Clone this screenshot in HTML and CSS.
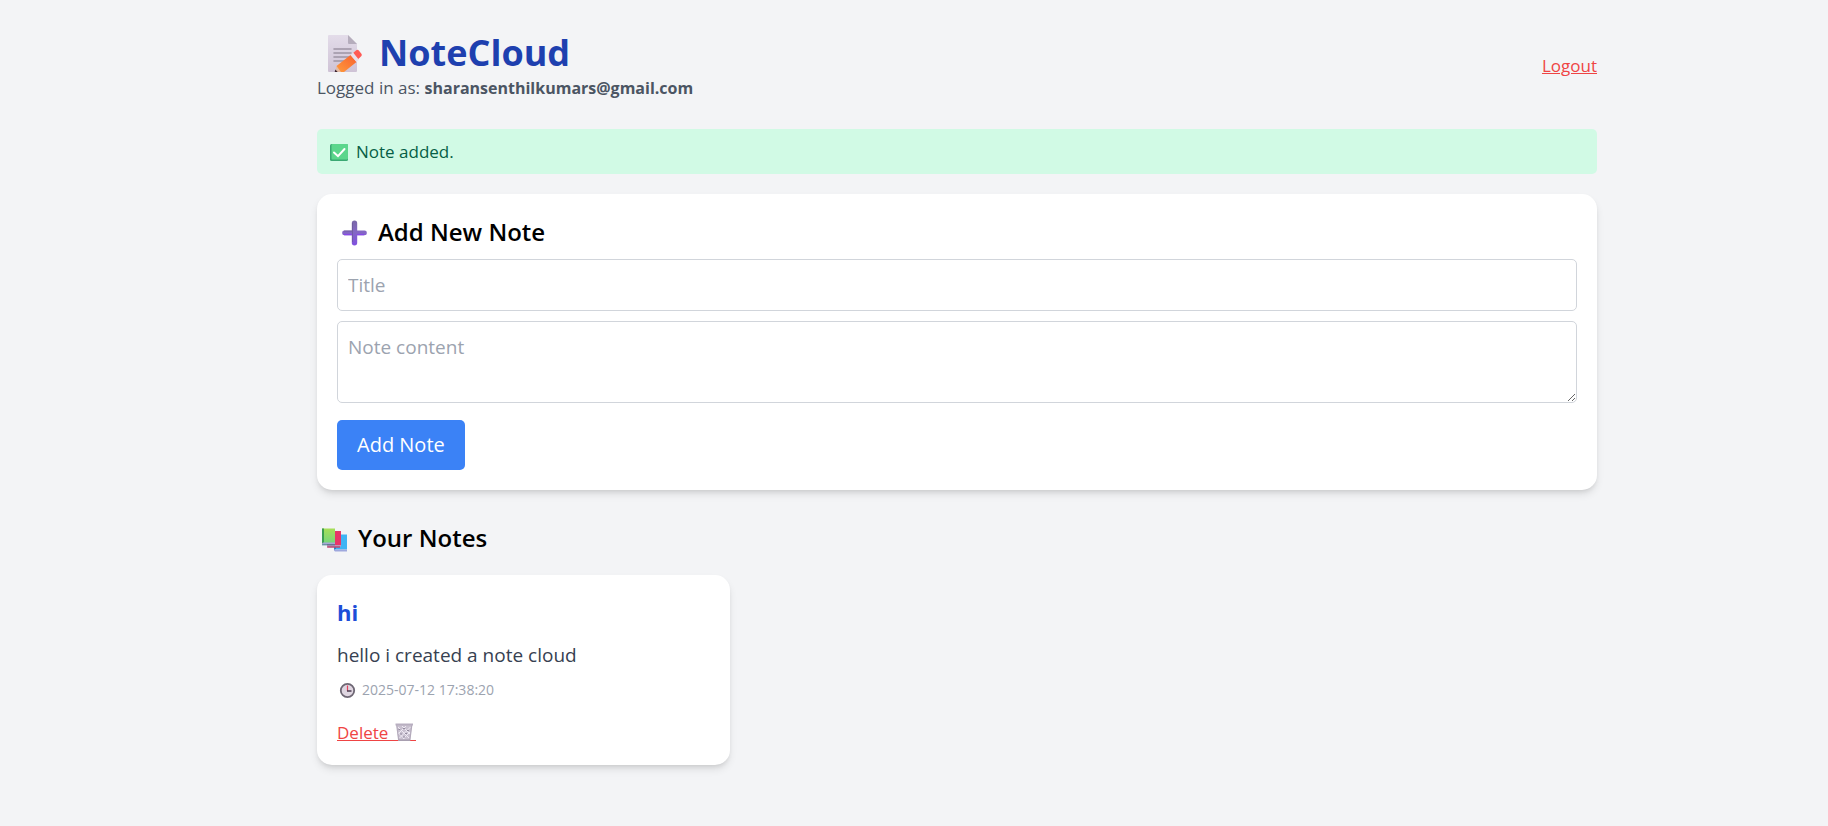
FILE: index.html
```html
<!DOCTYPE html>
<html lang="en">
<head>
<meta charset="utf-8">
<meta name="viewport" content="width=device-width, initial-scale=1">
<title>NoteCloud</title>
<link rel="stylesheet" href="styles.css">
</head>
<body>
<div class="container">
  <header class="header">
    <div>
      <h1 class="brand">
        <svg class="brand-icon" viewBox="0 0 55 45" aria-hidden="true">
          <defs>
            <linearGradient id="paper" x1="0" y1="0" x2="0" y2="1"><stop offset="0" stop-color="#e3dce9"/><stop offset="1" stop-color="#cfc3d6"/></linearGradient>
            <linearGradient id="pencil" x1="0" y1="1" x2="1" y2="0"><stop offset="0" stop-color="#ff9b3c"/><stop offset="1" stop-color="#f8602f"/></linearGradient>
          </defs>
          <path d="M12 5h19l9 9v27a1 1 0 0 1-1 1H12a1 1 0 0 1-1-1V6a1 1 0 0 1 1-1z" fill="url(#paper)"/>
          <path d="M31 5l9 9h-8a1 1 0 0 1-1-1z" fill="#b5adbc"/>
          <path d="M17 19h17M17 23h17M17 27h15M17 31h10" stroke="#9d94a4" stroke-width="1.6" stroke-linecap="round"/>
          <path d="M19.500 36L18 42h8z" fill="#e3bba5"/>
          <path d="M18.300 39.500l2.400 2.500h-3z" fill="#3b2633"/>
          <path d="M19.500 36L33.500 25l6 7L27 42h-3z" fill="url(#pencil)"/>
          <path d="M33.500 25l3-2.500 5.700 7-2.700 2.500z" fill="#eadfeb"/>
          <path d="M36.300 22.700l3-2.400a1.800 1.800 0 0 1 2.500.3l2.600 3.100a1.800 1.800 0 0 1-.2 2.500L41.300 29z" fill="#ff5a55"/>
        </svg>
        <span>NoteCloud</span>
      </h1>
      <p class="account">Logged in as: <strong>sharansenthilkumars@gmail.com</strong></p>
    </div>
    <a class="link" href="#logout">Logout</a>
  </header>

  <div class="notice" role="status">
    <svg class="notice-icon" viewBox="0 0 29 25" aria-hidden="true">
      <rect x="3" y="5" width="18" height="17" rx="1.500" fill="#3aa873"/>
      <rect x="4.500" y="5" width="16.500" height="15.500" rx="1" fill="#5bd68c"/>
      <path d="M7 13.500l4 3.700 6.500-7.200" fill="none" stroke="#fff" stroke-width="2" stroke-linecap="round"/>
    </svg>
    <span>Note added.</span>
  </div>

  <section class="card composer">
    <h2 class="heading">
      <svg class="heading-icon" viewBox="0 0 36 35" aria-hidden="true">
        <defs><linearGradient id="plus" x1="0" y1="0" x2="0" y2="1"><stop offset="0" stop-color="#7a68a8"/><stop offset=".45" stop-color="#8467c4"/><stop offset="1" stop-color="#8050e0"/></linearGradient></defs>
        <path d="M17.500 6.500a2.700 2.700 0 0 1 2.700 2.700V16.500h7.300a2.400 2.400 0 0 1 0 4.800h-7.300v7.500a2.700 2.700 0 0 1-5.400 0v-7.500H7.500a2.400 2.400 0 0 1 0-4.800h7.300V9.200a2.700 2.700 0 0 1 2.700-2.700z" fill="url(#plus)"/>
        <path d="M7 17h8M15.500 9v19" stroke="#66568e" opacity=".6"/>
        <path d="M7 20.700h8M20 20.700h7" stroke="#8748e8" stroke-width="1.200"/>
      </svg>
      <span>Add New Note</span>
    </h2>
    <form class="form">
      <input class="field" type="text" placeholder="Title" aria-label="Title">
      <textarea class="field" rows="2" placeholder="Note content" aria-label="Note content"></textarea>
      <button class="button" type="button">Add Note</button>
    </form>
  </section>

  <main>
    <h2 class="heading notes-heading">
      <svg class="heading-icon" viewBox="0 0 36 35" aria-hidden="true">
        <defs><linearGradient id="green" x1="0" y1="0" x2="0" y2="1"><stop offset="0" stop-color="#a7de58"/><stop offset="1" stop-color="#75d67c"/></linearGradient></defs>
        <path d="M17 14.500h13v15H17z" fill="#3fb4f4"/>
        <path d="M17 14.500h2v14l-2 2z" fill="#2387ca"/>
        <path d="M17 29.500h13v2H18l-1-1z" fill="#9fa8dd"/>
        <path d="M10 11h14v15H10z" fill="#e73568"/>
        <path d="M10 25h14v1l-1 1.500H11L10 26z" fill="#c493b8"/>
        <path d="M10 27h13" stroke="#b42353"/>
        <path d="M5 8.500h13v15H5z" fill="url(#green)"/>
        <path d="M5 8.500h2v14l-2 2z" fill="#3b9d51"/>
        <path d="M6 22.500h12v2H6l-1-1z" fill="#a5a7d5"/>
        <path d="M5 24.800h13" stroke="#43788d"/>
      </svg>
      <span>Your Notes</span>
    </h2>
    <div class="notes">
      <article class="card">
        <h3 class="note-title">hi</h3>
        <p class="note-text">hello i created a note cloud</p>
        <p class="note-date">
          <svg class="date-icon" viewBox="0 0 25 20" aria-hidden="true">
            <circle cx="10.500" cy="10.500" r="6.700" fill="#dfd6e1" stroke="#6e6774" stroke-width="1.800"/>
            <path d="M10.500 5.500v5.500" stroke="#e2435d" stroke-width="1.200"/>
            <path d="M10 11h4.500" stroke="#4b3d50" stroke-width="1.500"/>
          </svg>
          <time datetime="2025-07-12T17:38:20">2025-07-12 17:38:20</time>
        </p>
        <a class="link delete" href="#delete"><span>Delete</span><svg class="trash-icon" viewBox="0 0 28 25" aria-hidden="true">
            <path d="M0 20.500h28" stroke="#ef4444"/>
            <path d="M8.500 4h15.500l-2 17H10.500z" fill="#c9c1d0"/>
            <path d="M10 7l11 11M14 6l8 8M9.500 12l7 7M22.500 7l-11 11M18 6l-8 8M22 12l-7 7" stroke="#eee9f3"/>
            <path d="M10.500 9.500h2M15 8.500h2M19 10.500h2M12 14h2M17 13.500h2M15 17h2" stroke="#928a9e" stroke-width="1.200"/>
            <path d="M8.700 5l2 15.500M23.800 5l-2 15.500" stroke="#b3aabb" stroke-width="1.200"/>
            <path d="M7.500 3.500h17.500v2H7.500z" fill="#b8afc0"/>
            <path d="M10.500 20.200H22" stroke="#a79eae" stroke-width="1.500"/>
          </svg></a>
      </article>
    </div>
  </main>
</div>
</body>
</html>
```
FILE: styles.css
```css
*, *::before, *::after { box-sizing: border-box; }

body {
  margin: 0;
  padding: 30px 0 30px 86px;
  background: #f3f4f6;
  color: #000;
  font-family: "Segoe UI", "Open Sans", "Noto Sans", sans-serif;
  font-size: 19px;
  line-height: 30px;
}

h1, h2, h3, p { margin: 0; }
svg { display: block; flex: none; }

.container { max-width: 1280px; margin: 0 auto; }

.header {
  display: flex;
  justify-content: space-between;
  align-items: center;
  margin-bottom: 28px;
}
.brand {
  display: flex;
  align-items: center;
  gap: 7px;
  color: #1e40af;
  font-size: 36px;
  font-weight: 700;
  line-height: 45px;
}
.brand-icon { width: 55px; height: 45px; }
.account { color: #4b5563; font-size: 17px; line-height: 25px; }
.account strong { font-size: 16px; }
.link { color: #ef4444; font-size: 17px; line-height: 25px; }

.notice {
  display: flex;
  align-items: center;
  margin-bottom: 20px;
  padding: 10px;
  border-radius: 5px;
  background: #d1fae5;
  color: #065f46;
  font-size: 17px;
  line-height: 25px;
}
.notice-icon { width: 29px; height: 25px; }

.card {
  padding: 20px;
  border-radius: 15px;
  background: #fff;
  box-shadow: 0 5px 8px -1px rgba(0, 0, 0, .1), 0 3px 5px -2px rgba(0, 0, 0, .1);
}
.composer { margin-bottom: 30px; }

.heading {
  display: flex;
  align-items: center;
  gap: 5px;
  margin-bottom: 10px;
  font-size: 24px;
  font-weight: 600;
  line-height: 35px;
}
.heading-icon { width: 36px; height: 35px; }
.notes-heading { margin-bottom: 20px; }

.form { display: flex; flex-direction: column; align-items: flex-start; }
.field {
  width: 100%;
  margin: 0 0 10px;
  padding: 10px;
  border: 1px solid #d1d5db;
  border-radius: 5px;
  background: #fff;
  font: inherit;
}
input.field { height: 52px; }
textarea.field { margin-bottom: 17px; resize: vertical; }
.field::placeholder { color: #9ca3af; opacity: 1; }
.button {
  padding: 10px 20px;
  border: 0;
  border-radius: 5px;
  background: #3b82f6;
  color: #fff;
  font: inherit;
  font-size: 20px;
  cursor: pointer;
}

.notes {
  display: grid;
  grid-template-columns: repeat(3, minmax(0, 1fr));
  gap: 20px;
}
.note-title { color: #1d4ed8; font-size: 22px; font-weight: 700; line-height: 35px; }
.note-text { margin-top: 10px; color: #374151; }
.note-date {
  display: flex;
  align-items: center;
  margin: 10px 0 20px;
  color: #9ca3af;
  font-size: 14px;
  line-height: 20px;
}
.date-icon { width: 25px; height: 20px; }
.delete { display: flex; width: fit-content; }
.trash-icon { width: 28px; height: 25px; }

@media (max-width: 1400px) {
  body { padding: 30px 20px; }
}
@media (max-width: 900px) {
  .notes { grid-template-columns: 1fr; }
}
```
